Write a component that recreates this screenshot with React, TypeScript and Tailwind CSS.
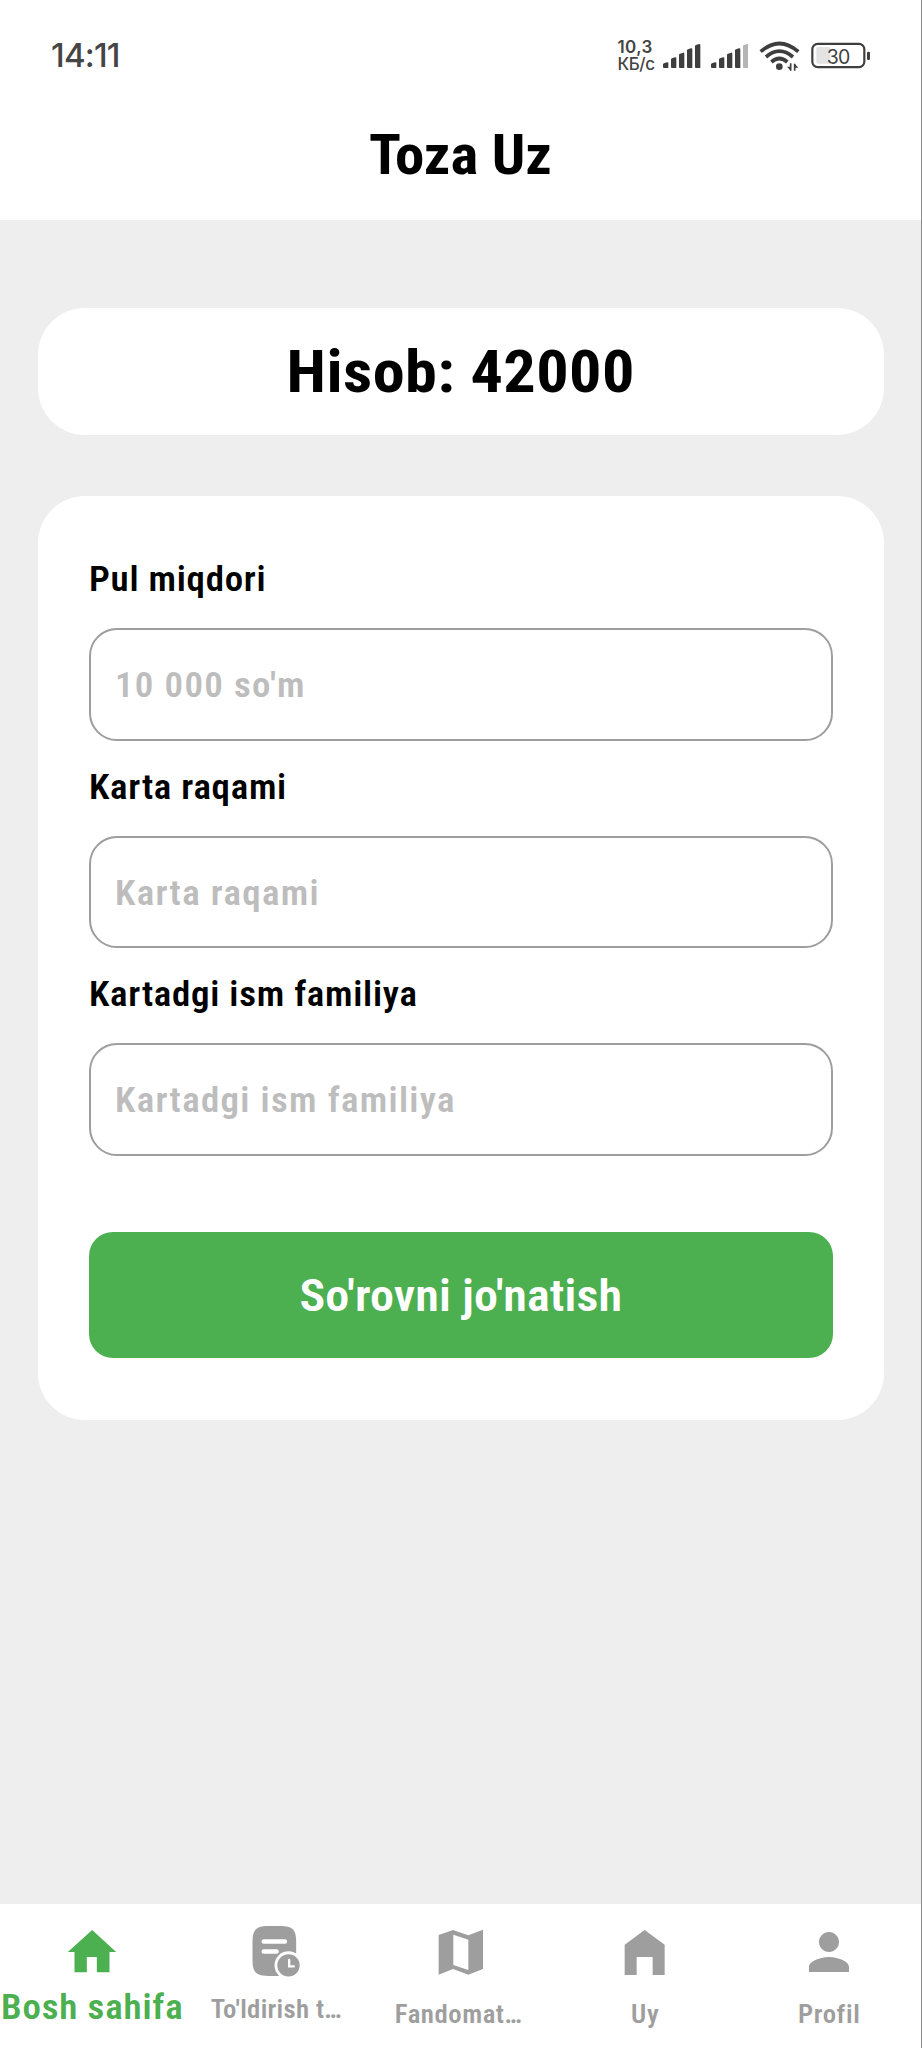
import type { ReactNode } from "react";

function SignalBars({ weakLast = false }: { weakLast?: boolean }) {
  const tops = [124, 109, 95, 82, 69];
  return (
    <svg className="h-[30px] w-[37.33px]" viewBox="0 60 112 90">
      {tops.map((top, i) => (
        <path
          key={top}
          d={`M${i * 24} ${top + 6}q0-2 3-3L${i * 24 + 12} ${top}q4-1 4 3V141H${i * 24 + 3}q-3 0-3-3z`}
          fill={weakLast && i === 4 ? "#b5b5b5" : "#3e3e3e"}
        />
      ))}
    </svg>
  );
}

function WifiIcon() {
  return (
    <svg className="h-[30px] w-[41.33px]" viewBox="476 60 124 90" fill="none" stroke="#3e3e3e">
      <path d="M481 92Q537 43 594 92" strokeWidth="11" />
      <path d="M497 108Q537 73 578 108" strokeWidth="11" />
      <path d="M513 123Q537 102 561 123" strokeWidth="11" />
      <circle cx="537" cy="137" r="10" fill="#3e3e3e" stroke="none" />
      <path d="M571 127V149M583 149V128" strokeWidth="5" />
      <path d="M560 137h11v12zM583 128l11 12h-11z" fill="#3e3e3e" stroke="none" />
    </svg>
  );
}

function Battery() {
  return (
    <div className="grid h-[30px] w-[59.33px]">
      <svg className="col-start-1 row-start-1 h-[30px] w-[59.33px]" viewBox="634 60 178 90">
        <rect x="650" y="78" width="42" height="50" rx="5" fill="#e3e3e3" />
        <rect x="638" y="68.5" width="156" height="70" rx="16" fill="none" stroke="#3e3e3e" strokeWidth="6.5" />
        <rect x="802" y="92" width="9" height="25" rx="4" fill="#3e3e3e" />
      </svg>
      <span className="col-start-1 row-start-1 pt-px pr-[6px] text-center font-['Inter',sans-serif] text-[19.5px] leading-[30px] tracking-[-0.8px] text-[#404040]">
        30
      </span>
    </div>
  );
}

function StatusBar() {
  return (
    <div className="flex h-[71px] items-end justify-between pr-[50.3px] pl-[51px]">
      <span className="pb-px font-['Inter',sans-serif] text-[33px] leading-[30px] font-medium tracking-[-0.8px] text-[#454545]">
        14:11
      </span>
      <div className="flex h-[31px] items-center">
        <div className="mr-[9px] flex w-[37px] flex-col font-['Inter',sans-serif] text-[17px] leading-[17px] font-semibold whitespace-nowrap text-[#444]">
          <span className="tracking-[0.4px]">10,3</span>
          <span className="font-medium tracking-[-0.4px]">КБ/с</span>
        </div>
        <SignalBars />
        <div className="w-[10.3px]" />
        <SignalBars weakLast />
        <div className="w-[10.4px]" />
        <WifiIcon />
        <div className="w-[11.3px]" />
        <Battery />
      </div>
    </div>
  );
}

function Field({ label, placeholder }: { label: string; placeholder: string }) {
  return (
    <label className="block h-[207.5px]">
      <span className="block origin-left scale-x-107 text-[34.5px] leading-[42px] font-[650] tracking-[0.68px]">
        {label}
      </span>
      <span className="mt-[28px] flex h-[112.5px] rounded-[28px] border-2 border-[#9e9e9e] bg-white pt-[2px] pl-[24px]">
        <input
          placeholder={placeholder}
          className="h-full w-[640px] origin-left scale-x-107 bg-transparent text-[34.5px] font-[650] tracking-[1.22px] outline-none placeholder:text-[#bdbdbd]"
        />
      </span>
    </label>
  );
}

function NavItem({ icon, children, labelClass }: { icon: ReactNode; children: string; labelClass: string }) {
  return (
    <button className="flex min-w-0 flex-1 flex-col items-center pt-[18px]">
      {icon}
      <span className={`scale-x-107 font-[650] whitespace-nowrap ${labelClass}`}>{children}</span>
    </button>
  );
}

export default function App() {
  return (
    <div className="flex h-[2048px] w-[922px] flex-col border-r border-[#8c8c8c] bg-[#eeeeee] font-['Roboto_Condensed','Roboto',sans-serif] text-black">
      <header className="h-[220px] bg-white">
        <StatusBar />
        <h1 className="mt-[54px] scale-x-107 text-center text-[55px] leading-[60px] font-bold">Toza Uz</h1>
      </header>

      <main className="flex flex-1 flex-col pt-[88px] pr-[37px] pl-[38px]">
        <section className="flex h-[126.5px] items-center justify-center rounded-[47px] bg-white pt-[2px]">
          <p className="scale-x-107 text-[60px] leading-[60px] font-bold tracking-[0.4px]">Hisob: 42000</p>
        </section>

        <form className="mt-[61px] h-[924.5px] rounded-[47px] bg-white pt-[62.5px] pr-[51.5px] pl-[51px]">
          <Field label="Pul miqdori" placeholder="10 000 so'm" />
          <Field label="Karta raqami" placeholder="Karta raqami" />
          <Field label="Kartadgi ism familiya" placeholder="Kartadgi ism familiya" />
          <button
            type="button"
            className="mt-[51px] flex h-[126px] w-full items-center justify-center rounded-[24px] bg-[#4caf50] pt-[3px] text-[45px] font-semibold tracking-[0.1px] text-white"
          >
            <span className="scale-x-107">So'rovni jo'natish</span>
          </button>
        </form>
      </main>

      <nav className="flex h-[144px] bg-white text-[#9e9e9e]">
        <NavItem
          labelClass="mt-[4px] text-[34.5px] leading-[42px] tracking-[0.78px] text-[#4caf50]"
          icon={
            <svg className="size-[60px]" viewBox="186.5 96 180 180" fill="#4caf50">
              <path d="M277 120L204 186H224V247H261V201H291V247H329V186H349Z" />
            </svg>
          }
        >
          Bosh sahifa
        </NavItem>
        <NavItem
          labelClass="mt-[13.5px] text-[25px] leading-[28px] tracking-[0.3px]"
          icon={
            <svg className="size-[60px]" viewBox="739.5 96 180 180" fill="currentColor">
              <path d="M759 156C759 119 770 108 807 108H842C879 108 890 119 890 156V210C890 247 879 258 842 258H807C770 258 759 247 759 210Z" />
              <path d="M793 154.5H856M793 184.5H831" stroke="#fff" strokeWidth="14" strokeLinecap="round" />
              <circle cx="867" cy="226" r="42" fill="#fff" />
              <circle cx="867" cy="226" r="33.5" />
              <path d="M869 210V229H883" fill="none" stroke="#fff" strokeWidth="7" strokeLinecap="round" />
            </svg>
          }
        >
          To'ldirish t…
        </NavItem>
        <NavItem
          labelClass="mt-[19px] mr-[3px] text-[25px] leading-[28px] tracking-[0.5px]"
          icon={
            <svg className="size-[60px]" viewBox="18 21 180 180" fill="currentColor">
              <path fillRule="evenodd" d="M41 60L84 45L130 61L174 44V162L130 179L84 162L41 179ZM85 59V150L130 165V74Z" />
            </svg>
          }
        >
          Fandomat…
        </NavItem>
        <NavItem
          labelClass="mt-[19px] text-[25px] leading-[28px] tracking-[0.6px]"
          icon={
            <svg className="size-[60px]" viewBox="463 96 180 180" fill="currentColor">
              <path d="M552 120L612 164V255H576V201H528V255H492V164Z" />
            </svg>
          }
        >
          Uy
        </NavItem>
        <NavItem
          labelClass="mt-[19px] text-[25px] leading-[28px] tracking-[0.6px]"
          icon={
            <svg className="size-[60px]" viewBox="0 0 24 24" fill="currentColor">
              <path d="M12 12c2.21 0 4-1.79 4-4s-1.79-4-4-4-4 1.79-4 4 1.79 4 4 4zm0 2c-2.67 0-8 1.34-8 4v2h16v-2c0-2.66-5.33-4-8-4z" />
            </svg>
          }
        >
          Profil
        </NavItem>
      </nav>
    </div>
  );
}
